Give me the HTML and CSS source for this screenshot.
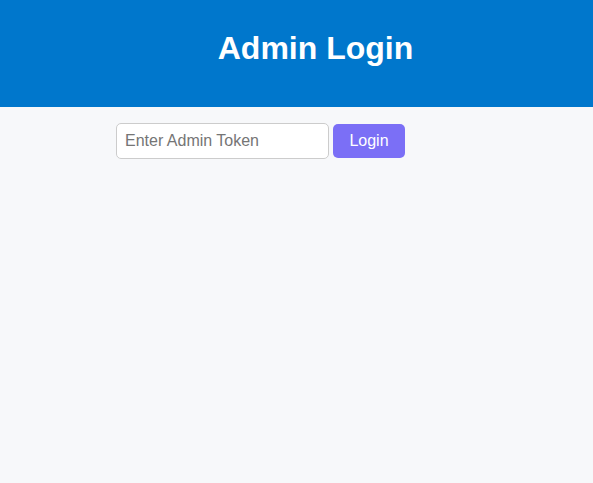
FILE: index.html
```html
<!DOCTYPE html>
<html lang="en">
<head>
<meta charset="utf-8">
<title>Admin Login</title>
<link rel="stylesheet" href="styles.css">
</head>
<body>
<header class="header">
  <h1 class="title">Admin Login</h1>
</header>
<main class="login-row">
  <input class="token-input" type="text" placeholder="Enter Admin Token">
  <button class="login-btn" type="button">Login</button>
</main>
</body>
</html>
```
FILE: styles.css
```css
html, body {
  margin: 0;
  padding: 0;
}
body {
  background: #f7f8fa;
  font-family: "Liberation Sans", Arial, sans-serif;
  min-height: 100vh;
}
.header {
  background: #0077cc;
  color: #ffffff;
  padding: 30px 0 40px 38px;
  text-align: center;
}
.title {
  margin: 0;
  font-size: 32px;
  line-height: 37px;
  font-weight: bold;
}
.login-row {
  display: flex;
  align-items: center;
  gap: 4px;
  margin: 16px 0 0 116px;
}
.token-input {
  box-sizing: border-box;
  width: 213px;
  height: 36px;
  padding: 8px;
  border: 1px solid #cccccc;
  border-radius: 5px;
  background: #ffffff;
  font-family: "Liberation Sans", Arial, sans-serif;
  font-size: 16px;
  color: #333333;
  outline: none;
}
.token-input::placeholder {
  color: #757575;
}
.login-btn {
  box-sizing: border-box;
  width: 72px;
  height: 34px;
  padding: 8px 16px;
  border: none;
  border-radius: 5px;
  background: #7b6ff6;
  color: #ffffff;
  font-family: "Liberation Sans", Arial, sans-serif;
  font-size: 16px;
  cursor: pointer;
}
```
